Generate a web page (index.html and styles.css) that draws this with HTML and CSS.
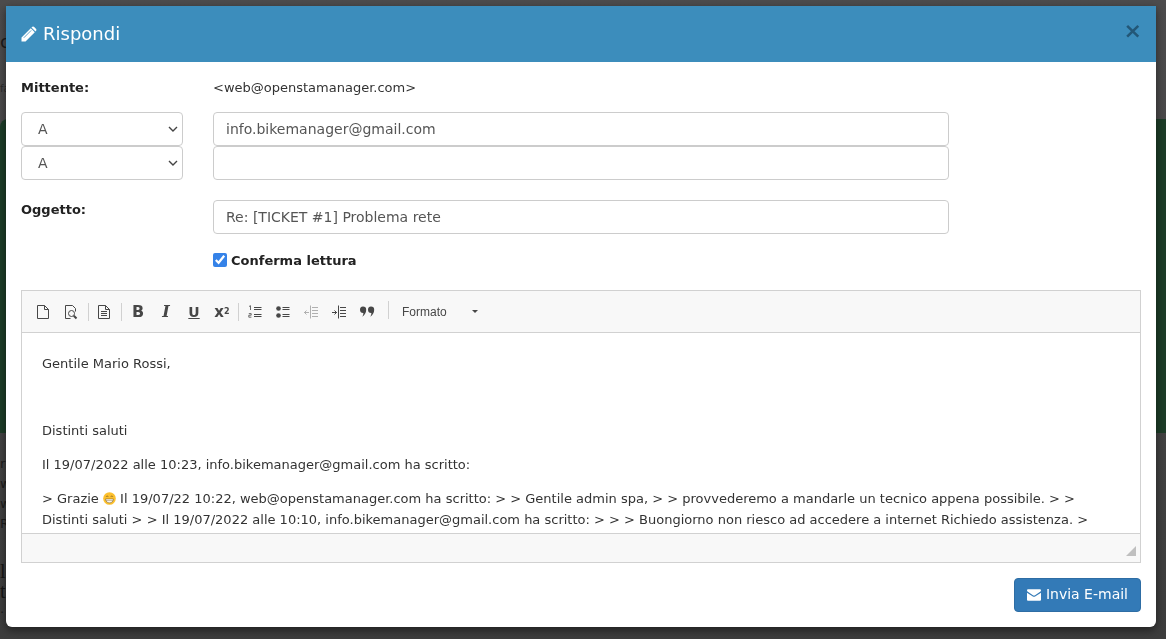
FILE: index.html
```html
<!DOCTYPE html>
<html lang="it">
<head>
    <meta charset="UTF-8">
    <title>Rispondi</title>
    <link rel="stylesheet" href="styles.css">
</head>
<body>
    <!-- pagina dietro al modal, si vede solo ai bordi -->
    <div class="behind">
        <div class="behind-green"></div>
        <span class="frag frag-c">c</span>
        <span class="frag frag-fa">fa</span>
        <span class="frag frag-r">r</span>
        <span class="frag frag-w1">w</span>
        <span class="frag frag-w2">w</span>
        <span class="frag frag-r2">R</span>
        <span class="frag frag-l">l</span>
        <span class="frag frag-t">t</span>
        <span class="frag frag-dot">.</span>
    </div>

    <div class="modal">
        <div class="modal-header">
            <h4 class="modal-title">
                <svg class="title-icon" viewBox="0 0 16 16"><path d="M0.500 11.500 9.800 2.200l4 4-9.300 9.300H.500zM10.900 1.100c.7-.7 1.700-.7 2.300 0l1.700 1.700c.7.700.7 1.600 0 2.300l-.4.400-4-4z" fill="#fff"/><path d="M2.800 11.800l7.400-7.400" stroke="#3c8dbc" stroke-width=".8"/></svg>
                Rispondi
            </h4>
            <span class="modal-close">×</span>
        </div>

        <div class="modal-body">
            <div class="form-row row-sender">
                <b>Mittente:</b>
                <span class="sender">&lt;web@openstamanager.com&gt;</span>
            </div>
            <div class="form-row">
                <select class="form-control"><option>A</option></select>
                <input class="form-control" type="text" value="info.bikemanager@gmail.com">
            </div>
            <div class="form-row">
                <select class="form-control"><option>A</option></select>
                <input class="form-control" type="text">
            </div>
            <div class="form-row row-subject">
                <b>Oggetto:</b>
                <input class="form-control" type="text" value="Re: [TICKET #1] Problema rete">
            </div>
            <div class="form-row row-check">
                <span></span>
                <label class="check"><input type="checkbox" checked> Conferma lettura</label>
            </div>

            <div class="editor">
                <div class="toolbar">
                    <span class="tb"><svg viewBox="0 0 16 16"><path d="M2.500 1.500h7l4 4v9h-11zM9.500 1.500v4h4" class="ln"/></svg></span>
                    <span class="tb"><svg viewBox="0 0 16 16"><path d="M12.500 7.500V4.500l-3-3h-7v13h5" class="ln"/><circle cx="8.500" cy="9.500" r="3" class="ln"/><path d="M10.800 11.800l2.700 2.700" class="ln thick"/></svg></span>
                    <i class="sep"></i>
                    <span class="tb"><svg viewBox="0 0 16 16"><path d="M2.500 1.500h7l4 4v9h-11zM9.500 1.500v4h4M5 7.500h6M5 9.500h6M5 11.500h6" class="ln"/></svg></span>
                    <i class="sep sep-wide"></i>
                    <span class="tb tb-text tb-b">B</span>
                    <span class="tb tb-text tb-i">I</span>
                    <span class="tb tb-text tb-u">U</span>
                    <span class="tb tb-text tb-x">x<sup>2</sup></span>
                    <i class="sep sep-list"></i>
                    <span class="tb"><svg viewBox="0 0 16 16"><path d="M7 3.500h7.500M7 5.500h7.500M7 10.500h7.500M7 12.500h7.500" class="ln"/><path d="M2 2.500l1.500-.8v4.300M1.800 9.600h2.400v1.600H1.800v2h2.600" class="ln thin"/></svg></span>
                    <span class="tb"><svg viewBox="0 0 16 16"><circle cx="3.500" cy="4.500" r="2.300" class="dot"/><circle cx="3.500" cy="11.500" r="2.300" class="dot"/><path d="M7.500 3.500h7M7.500 5.500h7M7.500 10.500h7M7.500 12.500h7" class="ln"/></svg></span>
                    <span class="tb tb-dim"><svg viewBox="0 0 16 16"><path d="M7.500 1.500v13M9 3.500h6M9 6.500h6M9 9.500h6M9 12.500h6M1 8.500h5M3.500 6.500l-2 2 2 2" class="ln"/></svg></span>
                    <span class="tb"><svg viewBox="0 0 16 16"><path d="M7.500 1.500v13M9 3.500h6M9 6.500h6M9 9.500h6M9 12.500h6M1 8.500h5M3.500 6.500l2 2-2 2" class="ln"/></svg></span>
                    <span class="tb"><svg viewBox="0 0 16 16"><path d="M4 2.500a3.200 3.200 0 0 1 3.200 3.200c0 3-1.600 5.500-4 7 .8-1.200 1.200-2.400 1.200-3.800A3.200 3.200 0 0 1 4 2.500zM12 2.500a3.200 3.200 0 0 1 3.200 3.200c0 3-1.600 5.500-4 7 .8-1.200 1.200-2.400 1.200-3.800A3.200 3.200 0 0 1 12 2.500z" class="dot"/></svg></span>
                    <i class="sep sep-tall"></i>
                    <span class="combo">Formato<i class="combo-arrow"></i></span>
                </div>
                <div class="editor-content">
                    <p>Gentile Mario Rossi,</p>
                    <p>&nbsp;</p>
                    <p>Distinti saluti</p>
                    <p>Il 19/07/2022 alle 10:23, info.bikemanager@gmail.com ha scritto:</p>
                    <p>&gt; Grazie <svg class="emoji" viewBox="0 0 14 14"><circle cx="7" cy="7" r="6.800" fill="#fcc02e"/><path d="M2.800 7.500h8.400c0 2.600-1.800 4.200-4.200 4.200S2.800 10.100 2.800 7.500z" fill="#fff" stroke="#7a5a20" stroke-width=".6"/><path d="M3.200 9.300h7.600" stroke="#7a5a20" stroke-width=".5"/><path d="M3.300 5.200c.5-1.100 2-1.100 2.500 0M8.200 5.200c.5-1.100 2-1.100 2.500 0" fill="none" stroke="#7a5a20" stroke-width=".8"/></svg> Il 19/07/22 10:22, web@openstamanager.com ha scritto: &gt; &gt; Gentile admin spa, &gt; &gt; provvederemo a mandarle un tecnico appena possibile. &gt; &gt; Distinti saluti &gt; &gt; Il 19/07/2022 alle 10:10, info.bikemanager@gmail.com ha scritto: &gt; &gt; &gt; Buongiorno non riesco ad accedere a internet Richiedo assistenza. &gt;</p>
                </div>
                <div class="editor-bottom"><i class="resizer"></i></div>
            </div>

            <div class="actions">
                <button class="btn-send">
                    <svg class="send-icon" viewBox="0 0 16 14"><path d="M1.400 1h13.200c.8 0 1.400.6 1.400 1.300 0 .7-.4 1.200-1 1.600L8.800 8c-.5.300-1.100.300-1.600 0L1 3.900C.4 3.500 0 3 0 2.300 0 1.600.6 1 1.400 1zM0 5l6.700 4.300c.8.500 1.800.500 2.600 0L16 5v7.600c0 .8-.6 1.400-1.400 1.400H1.400C.6 14 0 13.400 0 12.600z" fill="#fff"/></svg>
                    Invia E-mail
                </button>
            </div>
        </div>
    </div>
</body>
</html>
```

FILE: styles.css
```css
html, body { height: 100%; }
body { margin: 0; overflow: hidden; background: #494949; font-family: "DejaVu Sans", sans-serif; font-size: 13px; color: #222; }

/* sfondo */
.behind { position: fixed; top: 0; left: 0; right: 0; bottom: 0; background: linear-gradient(#4d4c4d, #444 60%, #3d3d3d); }
.behind-green { position: absolute; top: 119px; left: 0; right: 0; height: 314px; background: #1d3d28; border-radius: 8px 0 0 0; }
.frag { position: absolute; left: 0; color: #1c1c1c; line-height: 20px; font-size: 13px; }
.frag-c { top: 32px; font-size: 18px; }
.frag-fa { top: 79px; font-size: 10px; color: #2c2c2c; }
.frag-r { top: 454px; }
.frag-w1 { top: 474px; }
.frag-w2 { top: 494px; }
.frag-r2 { top: 514px; }
.frag-l { top: 561px; font-family: "Liberation Serif", serif; font-size: 20px; color: #161616; }
.frag-t { top: 581px; font-family: "Liberation Serif", serif; font-size: 20px; color: #161616; }
.frag-dot { top: 599px; }

/* modal */
.modal { position: relative; width: 1150px; height: 621px; margin: 6px 0 0 6px; background: #fff; border-radius: 0 0 6px 6px; box-shadow: 0 3px 9px rgba(0,0,0,0.5); overflow: hidden; }
.modal-header { display: flex; justify-content: space-between; align-items: center; height: 56px; padding: 0 15px; background: #3c8dbc; color: #fff; box-sizing: border-box; }
.modal-title { display: flex; align-items: center; gap: 6px; margin: 0; font-size: 18px; font-weight: 400; line-height: 1; }
.title-icon { width: 16px; height: 16px; }
.modal-close { font-size: 22px; line-height: 1; color: #1d4a66; margin: -7px -1px 0 0; font-weight: 700; opacity: .8; }
.modal-body { padding: 15px; }

.form-row { display: grid; grid-template-columns: 162px 736px; column-gap: 30px; }
.row-sender { height: 35px; padding-top: 3px; box-sizing: border-box; line-height: 16px; }
.row-subject { margin-top: 20px; line-height: 20px; }
.row-check { margin-top: 18px; }
.sender { color: #333; }

.form-control { height: 34px; box-sizing: border-box; width: 100%; margin: 0; border: 1px solid #ccc; border-radius: 4px; background: #fff; color: #555; font-family: inherit; font-size: 14px; padding: 0 12px; }
select.form-control { padding-left: 16px; appearance: none; background: #fff url("data:image/svg+xml,%3Csvg xmlns='http://www.w3.org/2000/svg' width='10' height='6'%3E%3Cpath d='M1 1l4 4 4-4' fill='none' stroke='%23444' stroke-width='1.400'/%3E%3C/svg%3E") no-repeat right 4px center; }
.check { display: flex; align-items: center; gap: 4px; font-weight: 700; font-size: 13px; height: 16px; }
.check input { width: 14px; height: 14px; margin: 0; accent-color: #3582e8; }

/* editor */
.editor { margin-top: 22px; border: 1px solid #d1d1d1; }
.toolbar { display: flex; align-items: center; height: 42px; padding-left: 7px; box-sizing: border-box; background: #f8f8f8; border-bottom: 1px solid #d1d1d1; }
.tb { display: flex; justify-content: center; align-items: center; width: 28px; height: 28px; color: #474747; }
.tb svg { width: 16px; height: 16px; }
.tb-dim { opacity: .4; }
.ln { fill: none; stroke: #474747; stroke-width: 1; }
.thin { stroke-width: .8; }
.thick { stroke-width: 2; }
.dot { fill: #474747; }
.tb-text { font-size: 16px; font-weight: 700; }
.tb-i { font-style: italic; font-family: "DejaVu Serif", serif; }
.tb-u { text-decoration: underline; font-size: 14px; }
.tb-x { font-size: 15px; }
.tb-x sup { font-size: 8px; line-height: 0; }
.sep { width: 1px; height: 18px; margin: 0 1px 0 3px; background: #d1d1d1; }
.sep-wide { margin: 0 2px 0 3px; }
.sep-list { margin: 0 2px; }
.sep-tall { margin: -4px 6px 0 7px; }
.combo { display: flex; align-items: center; width: 86px; padding-left: 7px; font-family: "Liberation Sans", sans-serif; font-size: 12px; color: #474747; }
.combo-arrow { margin-left: 25px; border: 3px solid transparent; border-top-color: #474747; border-bottom: 0; }

.editor-content { height: 200px; padding: 0 42px 0 20px; overflow: hidden; background: #fff; box-sizing: border-box; line-height: 1.6; color: #333; font-size: 13px; }
.editor-content p { margin: 13px 0; }
.editor-content p:first-child { margin-top: 20.600px; }
.emoji { width: 13px; height: 13px; vertical-align: -2px; }
.editor-bottom { display: flex; justify-content: flex-end; align-items: flex-end; height: 29px; background: #f8f8f8; border-top: 1px solid #d1d1d1; box-sizing: border-box; padding: 0 4px 6px 0; }
.resizer { width: 0; height: 0; border-style: solid; border-width: 0 0 10px 10px; border-color: transparent transparent #bfbfbf transparent; }

.actions { display: flex; justify-content: flex-end; margin-top: 15px; }
.btn-send { display: flex; align-items: center; gap: 5px; height: 34px; padding: 0 12px 2px; border: 1px solid #2e6da4; border-radius: 4px; background: #337ab7; color: #fff; font-family: inherit; font-size: 14px; }
.send-icon { width: 14px; height: 13px; }
```
